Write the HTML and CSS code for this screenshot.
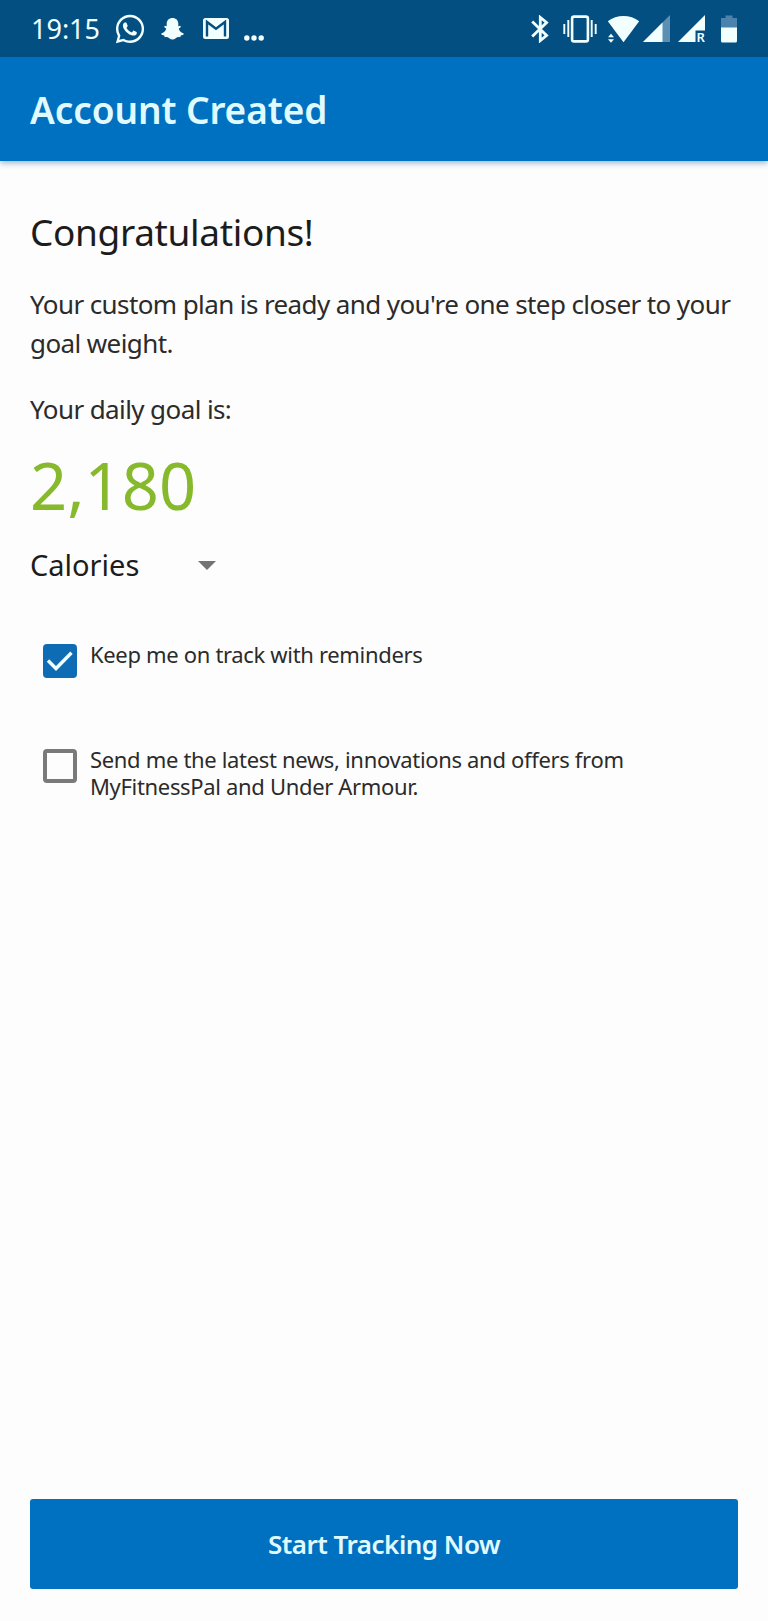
FILE: index.html
```html
<!DOCTYPE html>
<html lang="en">
<head>
  <meta charset="UTF-8">
  <title>Account Created</title>
  <link rel="stylesheet" href="styles.css">
</head>
<body>
  <div class="screen">
    <div class="status-bar">
      <div class="status-left">
        <span class="clock">19:15</span>
        <!-- WhatsApp -->
        <svg class="icon-whatsapp" width="34" height="34" viewBox="0 0 24 24" fill="#f2ffff">
          <path d="M12.04 2C6.58 2 2.13 6.45 2.13 11.91c0 1.75.46 3.45 1.32 4.95L2.05 22l5.25-1.38c1.45.79 3.08 1.21 4.74 1.21 5.46 0 9.91-4.45 9.91-9.91C21.95 6.45 17.5 2 12.04 2zm0 18.15c-1.48 0-2.93-.4-4.2-1.15l-.3-.18-3.12.82.83-3.04-.2-.31a8.19 8.19 0 0 1-1.26-4.38c0-4.54 3.7-8.23 8.25-8.23 4.54 0 8.23 3.69 8.23 8.23 0 4.55-3.69 8.24-8.23 8.24zm4.52-6.16c-.25-.12-1.47-.72-1.69-.81-.23-.08-.39-.12-.56.12-.17.25-.64.81-.78.97-.14.17-.29.19-.54.06-.25-.12-1.05-.39-1.99-1.23-.74-.66-1.23-1.47-1.38-1.72-.14-.25 0-.38.11-.51.11-.11.25-.29.37-.43.12-.15.17-.25.25-.41.08-.17.04-.31-.02-.43-.06-.13-.56-1.35-.77-1.84-.2-.48-.4-.42-.56-.43h-.47c-.17 0-.43.06-.66.31-.22.25-.87.85-.87 2.07s.89 2.4 1.01 2.56c.12.17 1.75 2.67 4.23 3.74 2 .8 2.4.65 2.84.61.43-.04 1.4-.57 1.6-1.12.2-.56.2-1.03.14-1.13-.06-.11-.22-.17-.47-.29z"/>
        </svg>
        <!-- Snapchat -->
        <svg class="icon-snapchat" width="23" height="22" viewBox="0 0 23 22" fill="#f2ffff">
          <path d="M11.5 0C15 0 17.3 2.4 17.3 5.7V8.2L19.2 7.8 19.9 9 17.7 10.7C18.4 13 20.2 14.7 22.7 15.5L22.4 16.8 19.8 17.5 19.2 19.2C17.5 18.8 16 19 14.7 20.2 12.8 21.9 10.2 21.9 8.3 20.2 7 19 5.5 18.8 3.8 19.2L3.2 17.5.6 16.8.3 15.5C2.8 14.7 4.6 13 5.3 10.7L3.1 9 3.8 7.8 5.7 8.2V5.7C5.7 2.4 8 0 11.5 0z"/>
        </svg>
        <!-- Gmail -->
        <svg class="icon-gmail" width="26" height="21" viewBox="0 0 26 21">
          <rect width="26" height="21" rx="2.5" fill="#f2ffff"/>
          <path d="M4 18.6V4L13 10.8 22 4v14.6" fill="none" stroke="#044f82" stroke-width="2.4"/>
        </svg>
        <svg class="icon-more" width="20" height="6" viewBox="0 0 20 6" fill="#f2ffff">
          <circle cx="2.8" cy="3" r="2.7"/>
          <circle cx="10" cy="3" r="2.7"/>
          <circle cx="17.2" cy="3" r="2.7"/>
        </svg>
      </div>
      <div class="status-right">
        <!-- Bluetooth -->
        <svg class="icon-bluetooth" width="18" height="28" viewBox="0 0 18 28" fill="none" stroke="#f2ffff" stroke-width="2.8">
          <path d="M1.2 6.5 15.6 20.5 9.3 25.6V2.4L15.6 7.5 1.2 21.5"/>
        </svg>
        <!-- Vibrate -->
        <svg class="icon-vibrate" width="34" height="28" viewBox="0 0 34 28" fill="none" stroke="#f2ffff">
          <rect x="9.1" y="1.6" width="15.8" height="24.8" rx="2" stroke-width="2.6"/>
          <path d="M5.3 5v17M28.7 5v17M1.3 9v10M32.7 9v10" stroke-width="1.9"/>
        </svg>
        <!-- Wi-Fi -->
        <svg class="icon-wifi" width="33" height="28" viewBox="0 0 33 28" fill="#f2ffff">
          <path d="M.8 6.2C9.7-.8 23.3-.8 32.2 6.2L16.5 27.2z"/>
          <path d="M4 18.8 7 22.3H1zM4 27.7 7 24.2H1z"/>
        </svg>
        <!-- Signal -->
        <svg class="icon-signal" width="27" height="27" viewBox="0 0 27 27">
          <path d="M0 27 27 0V27z" fill="#5c8fb4"/>
          <path d="M0 27 19.5 7.5V27z" fill="#f2ffff"/>
        </svg>
        <!-- Signal, roaming -->
        <svg class="icon-signal-r" width="27" height="27" viewBox="0 0 27 27">
          <path d="M0 27 27 0V15.5H17.5V27z" fill="#f2ffff"/>
          <text class="roaming" x="18.6" y="26.6">R</text>
        </svg>
        <!-- Battery -->
        <svg class="icon-battery" width="16" height="28" viewBox="0 0 16 28">
          <path d="M0 13V3H4.5V.5h7V3H16V13z" fill="#4b83ac"/>
          <path d="M0 12.5H16V26a1.5 1.5 0 0 1-1.5 1.5h-13A1.5 1.5 0 0 1 0 26z" fill="#f2ffff"/>
        </svg>
      </div>
    </div>

    <div class="toolbar">
      <h1>Account Created</h1>
    </div>

    <div class="content">
      <h2>Congratulations!</h2>
      <p class="message">Your custom plan is ready and you're one step closer to your goal weight.</p>
      <p class="goal-label">Your daily goal is:</p>
      <div class="goal-value">2,180</div>
      <div class="unit-select">
        <span>Calories</span>
        <svg width="18" height="9" viewBox="0 0 18 9"><path d="M0 0H18L9 9z" fill="#737373"/></svg>
      </div>

      <div class="option">
        <div class="checkbox checked">
          <svg width="34" height="34" viewBox="0 0 34 34" fill="none" stroke="#f2ffff" stroke-width="3.4"><path d="M5 16.5 13 24.5 28.5 8.8"/></svg>
        </div>
        <div class="option-text">Keep me on track with reminders</div>
      </div>
      <div class="option">
        <div class="checkbox"></div>
        <div class="option-text">Send me the latest news, innovations and offers from<br>MyFitnessPal and Under Armour.</div>
      </div>
    </div>

    <button class="start-button">Start Tracking Now</button>
  </div>
</body>
</html>
```
FILE: styles.css
```css
body {
  font-family: 'Noto Sans', sans-serif;
  background: #fdfdfd;
  margin: 0;
  color: #2b2b2b;
}

h1, h2, p {
  margin: 0;
}

.screen {
  display: flex;
  flex-direction: column;
  height: 1621px;
}

/* Status bar */
.status-bar {
  display: flex;
  justify-content: space-between;
  height: 57px;
  padding: 0 31px;
  background: #044f82;
  color: #f2ffff;
}

.status-left, .status-right {
  display: flex;
  align-items: center;
}

.clock {
  width: 82px;
  font-size: 27px;
  line-height: 57px;
}

.icon-snapchat {
  margin-left: 14px;
}

.icon-gmail {
  margin-left: 19px;
}

.icon-more {
  margin: 18px 0 0 15px;
}

.icon-vibrate {
  margin-left: 14px;
}

.icon-wifi {
  margin-left: 10px;
}

.icon-signal {
  margin-left: 3px;
}

.icon-signal-r {
  margin-left: 8px;
  overflow: visible;
}

.icon-battery {
  margin-left: 16px;
}

.roaming {
  font-size: 13px;
  font-weight: 600;
  fill: #f2ffff;
}

/* Toolbar */
.toolbar {
  display: flex;
  align-items: center;
  height: 104px;
  padding: 0 30px;
  background: #0070c0;
  box-shadow: 0 2px 6px rgba(0, 70, 130, 0.4);
}

h1 {
  font-size: 37px;
  font-weight: 600;
  letter-spacing: -0.1px;
  color: #e0fbff;
}

/* Content */
.content {
  flex: 1;
  padding: 46px 30px 0;
}

h2 {
  font-size: 37px;
  font-weight: 400;
  line-height: 50px;
  letter-spacing: -0.35px;
  color: #1c1c1c;
}

.message, .goal-label {
  font-size: 26px;
  line-height: 39px;
  letter-spacing: -0.6px;
}

.message {
  margin: 28px -10px 27px 0;
}

.goal-value {
  margin-top: 16px;
  font-size: 65px;
  line-height: 80px;
  color: #87b92c;
}

.unit-select {
  display: flex;
  align-items: center;
  justify-content: space-between;
  width: 186px;
  margin: 20px 0 56px;
  font-size: 29px;
  line-height: 40px;
  color: #1c1c1c;
}

.option {
  display: flex;
  align-items: flex-start;
  gap: 13px;
  margin: 0 0 68px 13px;
}

.checkbox {
  box-sizing: border-box;
  width: 34px;
  height: 34px;
  margin-top: 3px;
  border: 4px solid #7a7a7a;
  border-radius: 4px;
}

.checkbox.checked {
  border: none;
  background: #0d6cb4;
}

.option-text {
  font-size: 22px;
  line-height: 27px;
  letter-spacing: -0.33px;
}

.start-button {
  height: 90px;
  margin: 0 30px 32px;
  border: none;
  border-radius: 3px;
  background: #0070c0;
  color: #e0fbff;
  font-family: inherit;
  font-size: 26px;
  font-weight: 600;
  letter-spacing: -0.5px;
}
```
